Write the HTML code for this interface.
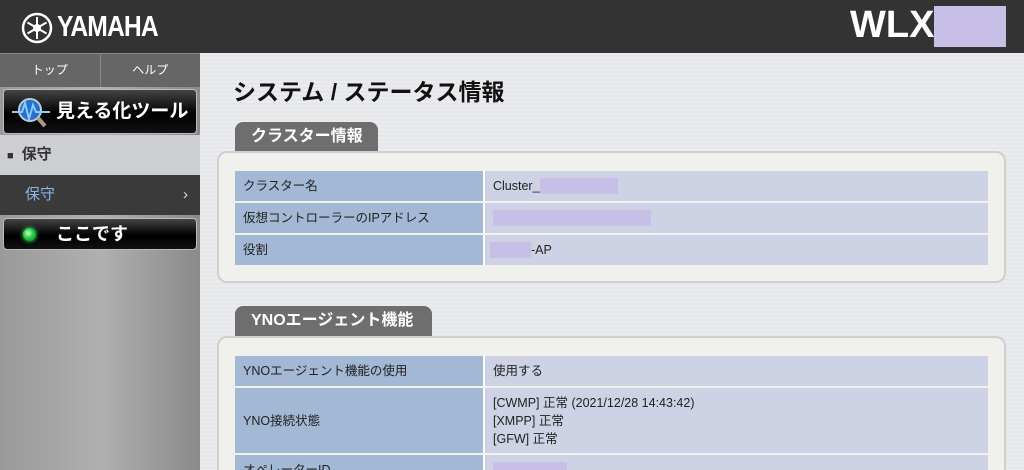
<!DOCTYPE html>
<html style="overflow:hidden;height:470px"><head><meta charset="utf-8"><style>
*{margin:0;padding:0;box-sizing:border-box}
body{width:1024px;height:470px;overflow:hidden;font-family:"Liberation Sans","Noto Sans CJK JP",sans-serif;background:repeating-linear-gradient(180deg,#e4e6e9 0,#eceef0 2px,#e2e4e7 4px);position:relative}
.hdr{position:absolute;left:0;top:0;width:1024px;height:53px;background:#333}
.logo{position:absolute;left:21px;top:11px;color:#fff;font-weight:bold;font-size:29px;display:flex;align-items:center}
.logo span{display:inline-block;transform:scaleX(0.85);transform-origin:left;letter-spacing:-1px}
.wlx{position:absolute;left:850px;top:4px;color:#fff;font-weight:bold;font-size:38px}
.red{position:absolute;background:#c8bfe6}
.side{position:absolute;left:0;top:53px;width:200px;height:417px;background:linear-gradient(90deg,#9a9a9a,#b0b0b0,#8a8a8a);overflow:hidden}
.tabs{position:absolute;left:0;top:0;width:200px;height:34px;background:#666;display:flex;border-top:1px solid #888}
.tabs div{flex:1;color:#fff;font-size:12px;text-align:center;line-height:32px;border-right:1px solid #888}
.btn{position:absolute;left:3px;width:194px;background:linear-gradient(#444,#000 55%,#111);border:1px solid #bbb;border-radius:4px;color:#fff;font-weight:bold}
.sec{position:absolute;left:0;top:82px;width:200px;height:40px;background:#ccced1;font-size:15px;font-weight:bold;color:#333;line-height:40px;padding-left:7px}
.sel{position:absolute;left:0;top:122px;width:200px;height:40px;background:#3a3a3a;color:#8ab4e8;font-size:15px;line-height:40px;padding-left:25px}
.title{position:absolute;left:233px;top:73px;font-size:23px;font-weight:bold;color:#111}
.tab{position:absolute;left:235px;height:30px;background:#6e6e6e;border-radius:8px 8px 0 0;color:#fff;font-weight:bold;font-size:16px;line-height:30px;padding-left:16px}
.panel{position:absolute;left:217px;width:789px;background:#f0f0ec;border:2px solid #cfcfcf;border-radius:10px}
table{position:absolute;left:16px;border-collapse:separate;border-spacing:0 2px;width:753px;table-layout:fixed;font-size:12.5px;color:#222}
td{padding-left:8px;height:30px;vertical-align:middle;line-height:16px}
td.l{background:#a3b8d4;width:250px;border-right:2px solid #fff}
td.v{background:#cdd3e4}
.rb{display:inline-block;height:16px;background:#c8bfe6;vertical-align:top}
</style></head><body>
<div class="hdr">
 <div class="logo"><svg width="32" height="32" viewBox="0 0 32 32"><circle cx="16" cy="16" r="14" fill="none" stroke="#fff" stroke-width="2.5"/><g stroke="#fff" stroke-width="2"><line x1="16" y1="5" x2="16" y2="27"/><line x1="6.5" y1="10.5" x2="25.5" y2="21.5"/><line x1="25.5" y1="10.5" x2="6.5" y2="21.5"/></g><circle cx="16" cy="16" r="4" fill="#fff"/></svg><span style="margin-left:4px">YAMAHA</span></div>
 <div class="wlx">WLX</div>
 <div class="red" style="left:934px;top:6px;width:72px;height:41px"></div>
</div>
<div class="side">
 <div class="tabs"><div>トップ</div><div style="border-right:none">ヘルプ</div></div>
 <div class="btn" style="top:36px;height:45px;font-size:19px;line-height:43px;padding-left:52px"><svg style="position:absolute;left:6px;top:5px" width="42" height="34" viewBox="0 0 42 34"><circle cx="20" cy="15" r="11" fill="#2a6fc9" stroke="#bcd" stroke-width="2"/><path d="M2 17h10l3-9 4 16 4-14 3 7h14" fill="none" stroke="#8cf" stroke-width="2"/><line x1="28" y1="23" x2="35" y2="31" stroke="#a98" stroke-width="4"/></svg>見える化ツール</div>
 <div class="sec"><span style="font-size:11px;margin-right:8px">■</span>保守</div>
 <div class="sel">保守<span style="position:absolute;right:12px;color:#ddd">›</span></div>
 <div class="btn" style="top:165px;height:32px;font-size:18px;line-height:30px;padding-left:52px"><span style="position:absolute;left:19px;top:9px;width:13px;height:13px;border-radius:50%;background:radial-gradient(circle at 40% 40%,#cfc,#2c4 45%,#083);box-shadow:0 0 4px #4f6"></span>ここです</div>
</div>
<div class="title">システム / ステータス情報</div>
<div class="tab" style="top:122px;width:143px">クラスター情報</div>
<div class="panel" style="top:151px;height:132px">
 <table style="top:16px">
  <tr><td class="l">クラスター名</td><td class="v">Cluster_<span class="rb" style="width:78px"></span></td></tr>
  <tr><td class="l">仮想コントローラーのIPアドレス</td><td class="v"><span class="rb" style="width:158px"></span></td></tr>
  <tr><td class="l">役割</td><td class="v" style="padding-left:5px"><span class="rb" style="width:41px"></span>-AP</td></tr>
 </table>
</div>
<div class="tab" style="top:306px;width:197px">YNOエージェント機能</div>
<div class="panel" style="top:336px;height:150px">
 <table style="top:16px">
  <tr><td class="l">YNOエージェント機能の使用</td><td class="v">使用する</td></tr>
  <tr><td class="l" style="height:65px">YNO接続状態</td><td class="v" style="line-height:18px">[CWMP] 正常 (2021/12/28 14:43:42)<br>[XMPP] 正常<br>[GFW] 正常</td></tr>
  <tr><td class="l">オペレーターID</td><td class="v"><span class="rb" style="width:74px"></span></td></tr>
 </table>
</div>
</body></html>
